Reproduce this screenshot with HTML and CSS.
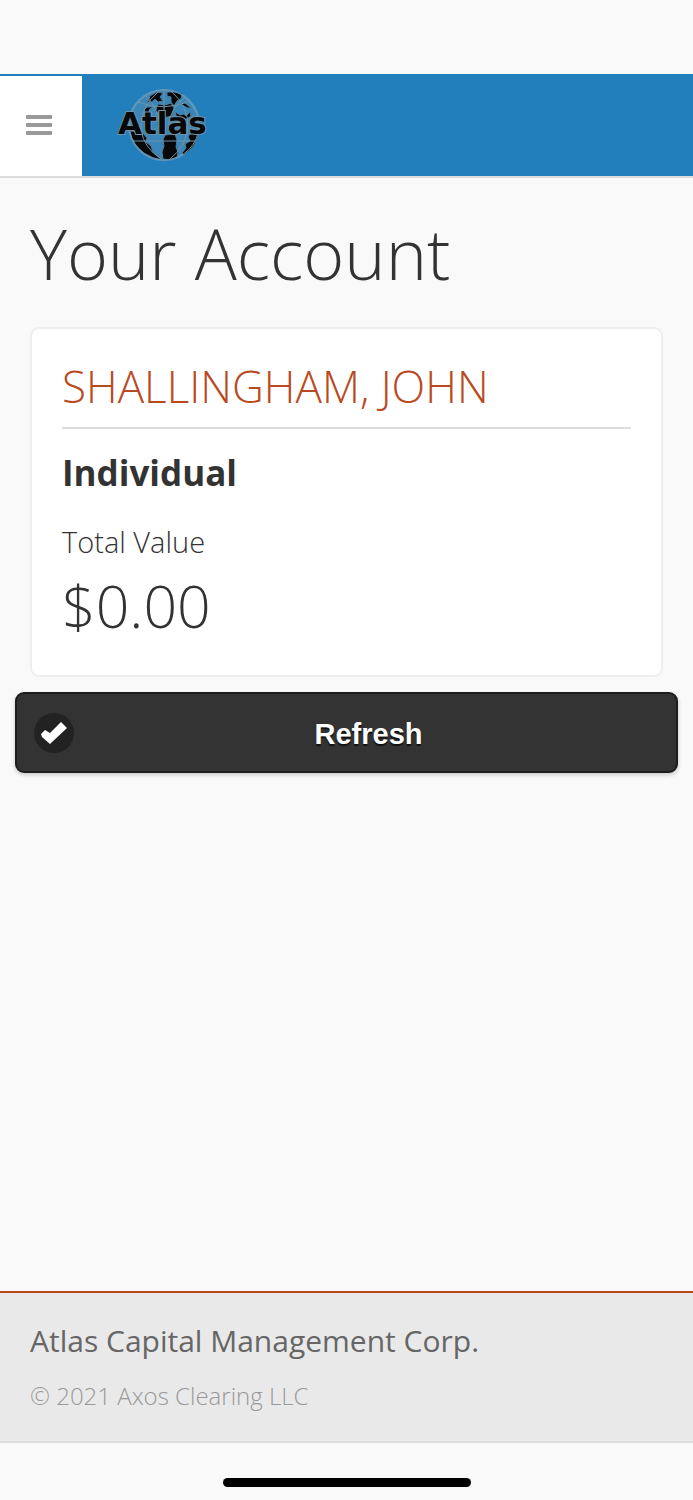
FILE: index.html
```html
<!DOCTYPE html>
<html lang="en">
<head>
    <meta charset="UTF-8" />
    <meta name="viewport" content="width=device-width, initial-scale=1" />
    <title>Your Account</title>
    <link rel="stylesheet" href="styles.css">
</head>
<body>

<header class="header">
    <button class="menu-button" type="button" aria-label="Menu">
        <span class="bar"></span>
        <span class="bar"></span>
        <span class="bar"></span>
    </button>
    <a class="logo" href="#" aria-label="Atlas">
        <svg width="106" height="84" viewBox="0 0 106 84">
            <!-- globe -->
            <g class="globe-halo">
                <circle cx="54" cy="43" r="35" />
            </g>
            <g class="globe-dark">
                <path d="M20 49 L32 50 L37 56 L36 60 L41 64 L43 70 L49 75 L53 78 Q43 77 34 71 Q22 62 20 49Z" />
                <path d="M55 53 L65 52 L67 58 L66 65 L68 70 L67 75 L60 78 L53 77 L52 70 L54 64 L53 58Z" />
                <path d="M89 50 Q87 61 81 67 L74 73 L72 71 L76 66 L75 62 L80 59 L78 54 L82 51Z" />
                <path d="M40 14 L47 10 L53 11 L50 15 L53 19 L48 20 L45 17 L42 20 L37 21 L39 17Z" />
                <path d="M57 10 L66 10 L72 12 L71 17 L67 19 L64 24 L61 20 L61 15 L57 14Z" />
                <path d="M48 22 L55 23 L61 21 L64 26 L62 34 L53 36 L48 34 L49 30 L45 30Z" />
                <path d="M65 30 L70 33 L74 32 L76 34 L80 30 L81 34 L77 37 L72 37 L67 36Z" />
                <path d="M34 28 L37 25 L43 25 L39 28 L40 31 L35 31Z" />
                <path d="M70 22 L75 21 L81 26 L78 26Z" />
            </g>
            <g class="globe-lines">
                <circle cx="54" cy="43" r="35" />
                <path d="M28 20 Q54 30 80 19" />
                <path d="M22 59 H86" />
                <path d="M54 8 V36" />
                <path d="M49 9 Q29 26 31 48 Q34 66 51 77" />
                <path d="M61 9 Q79 25 78 46 Q75 65 60 77" />
                <path d="M36 14 Q48 26 50 43 M75 15 Q61 26 58 43" />
            </g>
            <text class="logo-text" x="8" y="52">Atlas</text>
        </svg>
    </a>
</header>

<main class="content">
    <h1 class="title">Your Account</h1>

    <section class="card">
        <h2 class="name">SHALLINGHAM, JOHN</h2>
        <h3 class="account-type">Individual</h3>
        <p class="label">Total Value</p>
        <p class="value">$0.00</p>
    </section>

    <button class="refresh" type="button">
        <span class="refresh-icon">
            <svg width="40" height="40" viewBox="0 0 40 40">
                <path d="M7 21 L11 17 L16 20 L27 9 L33 15 L16 31 L8 24Z" />
            </svg>
        </span>
        <span class="refresh-text">Refresh</span>
    </button>
</main>

<footer class="footer">
    <p class="company">Atlas Capital Management Corp.</p>
    <p class="copyright">© 2021 Axos Clearing LLC</p>
</footer>

<div class="home-area">
    <div class="home-bar"></div>
</div>

</body>
</html>
```
FILE: styles.css
```css
* {
    box-sizing: border-box;
}
body {
    display: flex;
    flex-direction: column;
    min-height: 100vh;
    margin: 0;
    padding-top: 74px;
    font-family: "Open Sans", sans-serif;
    font-weight: 300;
    color: #333;
    background-color: #f9f9f9;
}
h1, h2, h3, p {
    margin: 0;
}
.header {
    display: flex;
    height: 104px;
    background-color: #227fbb;
    border-bottom: 2px solid #ddd;
}
.menu-button {
    display: flex;
    flex-direction: column;
    align-items: center;
    justify-content: center;
    gap: 4px;
    width: 82px;
    margin: 0;
    padding: 0 4px 2px 0;
    background-color: #fff;
    border: 0;
    border-top: 2px solid #227fbb;
}
.bar {
    width: 26px;
    height: 4px;
    border-radius: 1px;
    background-color: #999;
}
.logo {
    margin: 8px 0 0 28px;
}
.logo svg {
    display: block;
}
.globe-halo {
    fill: #3a86b8;
    stroke: #5f9cc2;
    stroke-width: 2;
}
.globe-dark {
    fill: #080808;
    stroke: #4b7c9b;
    stroke-width: 1;
}
.globe-lines {
    fill: none;
    stroke: #6d94ab;
    stroke-width: 1;
}
.logo-text {
    font-family: "DejaVu Sans", sans-serif;
    font-size: 31px;
    font-weight: bold;
    fill: #080808;
    stroke: #6e93aa;
    stroke-width: 2;
    paint-order: stroke;
}
.content {
    flex: 1;
    padding: 35px 15px 0;
}
.title {
    margin: 0 15px 34px;
    font-size: 70px;
    font-weight: 300;
    line-height: 80px;
}
.card {
    margin: 0 15px 15px;
    padding: 27px 30px 35px;
    background-color: #fff;
    border: 2px solid #eee;
    border-radius: 9px;
}
.name {
    margin-bottom: 19px;
    padding-bottom: 11px;
    font-size: 44px;
    font-weight: 300;
    line-height: 60px;
    color: #b94a1f;
    border-bottom: 2px solid #ddd;
}
.account-type {
    margin-bottom: 24px;
    font-size: 35px;
    font-weight: 700;
    line-height: 50px;
}
.label {
    margin-bottom: 8px;
    font-size: 29px;
    line-height: 40px;
}
.value {
    font-size: 59px;
    line-height: 70px;
}
.refresh {
    display: flex;
    align-items: center;
    width: 100%;
    height: 81px;
    padding: 0 17px;
    font-family: "Liberation Sans", Arial, sans-serif;
    font-size: 29px;
    font-weight: bold;
    color: #fff;
    text-shadow: 0 2px 1px #111;
    background-color: #333;
    border: 2px solid #1d1d1d;
    border-radius: 9px;
    box-shadow: 0 2px 4px rgba(0,0,0,0.2);
}
.refresh-icon {
    width: 40px;
    height: 40px;
    border-radius: 50%;
    background-color: #222;
}
.refresh-icon svg {
    display: block;
    fill: #fff;
}
.refresh-text {
    flex: 1;
    padding: 3px 0 0 4px;
    text-align: center;
}
.footer {
    padding: 28px 30px 27px;
    background-color: #e9e9e9;
    border-top: 2px solid #b94a1f;
    border-bottom: 2px solid #ddd;
}
.company {
    margin-bottom: 17px;
    font-size: 30px;
    font-weight: 400;
    line-height: 40px;
    color: #666;
}
.copyright {
    font-size: 24px;
    line-height: 36px;
    color: #999;
}
.home-area {
    height: 57px;
    padding-top: 35px;
}
.home-bar {
    width: 248px;
    height: 9px;
    margin: 0 auto;
    border-radius: 5px;
    background-color: #000;
}
```
